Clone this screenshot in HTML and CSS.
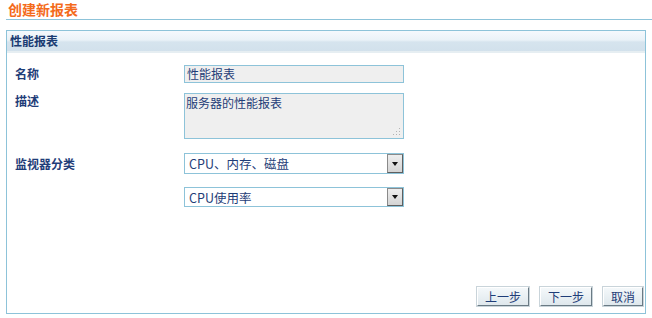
FILE: index.html
```html
<!DOCTYPE html>
<html lang="zh-CN">
<head>
  <meta charset="UTF-8" />
  <title>创建新报表</title>
  <link rel="stylesheet" href="styles.css">
</head>
<body>
  <h1 class="page-title">创建新报表</h1>

  <div class="panel">
    <div class="panel-head">性能报表</div>

    <div class="panel-body">
      <div class="form">
        <label class="lbl lbl-mid">名称</label>
        <div class="field input">性能报表</div>

        <label class="lbl lbl-top">描述</label>
        <div class="field textarea">
          服务器的性能报表
          <svg class="grip" width="9" height="9" viewBox="0 0 9 9">
            <rect x="7" y="1" width="1" height="1" fill="#b4b4b4"/>
            <rect x="4" y="4" width="1" height="1" fill="#b4b4b4"/>
            <rect x="7" y="4" width="1" height="1" fill="#b4b4b4"/>
            <rect x="1" y="7" width="1" height="1" fill="#b4b4b4"/>
            <rect x="4" y="7" width="1" height="1" fill="#b4b4b4"/>
            <rect x="7" y="7" width="1" height="1" fill="#b4b4b4"/>
          </svg>
        </div>

        <label class="lbl lbl-sel">监视器分类</label>
        <div class="field select sel-1">
          <span>CPU、内存、磁盘</span>
          <span class="arrow"></span>
        </div>

        <span></span>
        <div class="field select sel-2">
          <span>CPU使用率</span>
          <span class="arrow"></span>
        </div>
      </div>

      <div class="actions">
        <button class="btn">上一步</button>
        <button class="btn">下一步</button>
        <button class="btn">取消</button>
      </div>
    </div>
  </div>
</body>
</html>
```

FILE: styles.css
```css
* { box-sizing: border-box; }

body {
  margin: 0;
  background: #fff;
  font-family: "Noto Sans CJK SC", "Noto Sans", sans-serif;
  font-size: 12px;
  color: #1f3d78;
}

.page-title {
  margin: 0 0 0 6px;
  height: 20px;
  padding: 1px 0 0 2px;
  font-size: 14px;
  line-height: 17px;
  font-weight: bold;
  color: #f46b1c;
  border-bottom: 1px solid #8dc3d9;
}

.panel {
  margin: 10px 0 0 6px;
  width: 640px;
  height: 284px;
  border: 1px solid #8dc3d9;
  display: flex;
  flex-direction: column;
}

.panel-head {
  height: 22px;
  padding: 0 0 0 3px;
  line-height: 20px;
  font-weight: bold;
  color: #1a3b72;
  background: linear-gradient(#f5f9fd, #eaf2f8 45%, #d6e4ee 55%, #d2e1ec);
  border-bottom: 2px solid #e6eef2;
}

.panel-body {
  flex: 1;
  display: flex;
  flex-direction: column;
  padding: 12px 2px 7px 8px;
}

.form {
  display: grid;
  grid-template-columns: 169px 220px;
  align-items: start;
  row-gap: 10px;
}

.lbl {
  font-weight: bold;
  color: #1f3d78;
}

.lbl-mid { line-height: 18px; }
.lbl-top { line-height: 14px; padding-top: 1px; }
.lbl-sel { line-height: 21px; margin-top: 4px; }

.field {
  border: 1px solid #8dc3d9;
  color: #1f3d78;
}

.input {
  height: 18px;
  background: #efefef;
  line-height: 16px;
  padding: 0 2px;
}

.textarea {
  position: relative;
  height: 46px;
  background: #efefef;
  line-height: 16px;
  padding: 1px 1px;
}

.grip {
  position: absolute;
  right: 2px;
  bottom: 2px;
}

.select {
  display: flex;
  align-items: stretch;
  justify-content: space-between;
  background: #fff;
  padding: 0 0 0 4px;
  font-size: 12.5px;
}

.select span:first-child {
  align-self: center;
}

.sel-1 { height: 21px; margin-top: 4px; }
.sel-2 { height: 20px; margin-top: 3px; }

.arrow {
  width: 16px;
  border: 1px solid #5f5f5f;
  border-top-color: #8a8a8a;
  border-left-color: #8a8a8a;
  background: linear-gradient(#eeeeee, #d4d4d4);
  position: relative;
}

.arrow::after {
  content: "";
  position: absolute;
  left: 4px;
  top: 50%;
  margin-top: -2px;
  border-left: 3px solid transparent;
  border-right: 3px solid transparent;
  border-top: 4px solid #111;
}

.actions {
  margin-top: auto;
  display: flex;
  justify-content: flex-end;
  gap: 11px;
}

.btn {
  height: 19px;
  padding: 0 7px;
  font-family: inherit;
  font-size: 12px;
  line-height: 15px;
  color: #1f3d78;
  background: linear-gradient(#f4f8fa, #dfe8ed);
  border: 1px solid;
  border-color: #ffffff #6a7a84 #6a7a84 #ffffff;
  box-shadow: 0 0 0 1px #c9d4da;
  cursor: pointer;
}
```
